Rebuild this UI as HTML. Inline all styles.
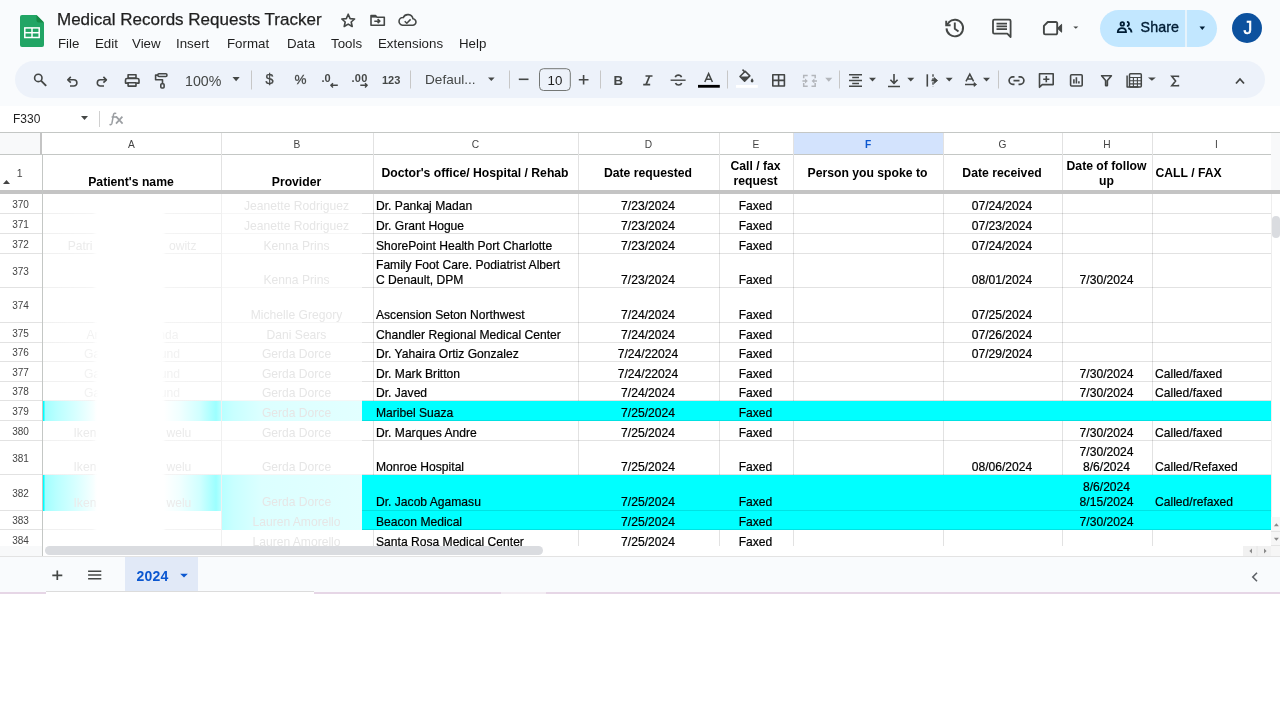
<!DOCTYPE html>
<html><head><meta charset="utf-8">
<style>
*{margin:0;padding:0;box-sizing:border-box}
html{will-change:transform}
html,body{width:1280px;height:720px;overflow:hidden;background:#fff;font-family:"Liberation Sans",sans-serif;position:relative}
.abs{position:absolute}
#top{position:absolute;left:0;top:0;width:1280px;height:106px;background:#f9fbfd}
#title{position:absolute;left:57px;top:9.5px;font-size:17px;color:#1f1f1f;white-space:nowrap;letter-spacing:0px;-webkit-text-stroke:0.25px #1f1f1f}
.menu{position:absolute;top:35.5px;font-size:13.3px;color:#1f1f1f;white-space:nowrap}
#tb{position:absolute;left:15px;top:61px;width:1250px;height:37px;border-radius:19px;background:#edf2fa}
.ic{position:absolute}
.sep{position:absolute;top:69px;width:1px;height:20px;background:#c7c7c7}
.tt{position:absolute;font-size:13px;color:#444746;white-space:nowrap}
#fbar{position:absolute;left:0;top:106px;width:1280px;height:26px;background:#fff}
#namebox{position:absolute;left:13px;top:112px;font-size:12px;color:#1f1f1f}
#gridtop{position:absolute;left:0;top:132px;width:1280px;height:1px;background:#c4c7c5}
/* grid */
#grid{position:absolute;left:0;top:0;width:1280px;height:720px}
.hl{position:absolute;left:0;width:1271px;height:1px;background:rgba(0,0,0,0.115)}
.vl{position:absolute;top:133px;width:1px;height:423px;background:#e2e2e2}
.bg{position:absolute;background:#00ffff}
.rh{position:absolute;left:0;width:41px;text-align:center;font-size:10px;color:#444;padding-top:1px}
.c{position:absolute;font-size:12.1px;color:#000;-webkit-text-stroke:0.2px #000;white-space:nowrap;overflow:hidden;display:flex;align-items:flex-end;line-height:15px;padding-bottom:0px}
.c.left{justify-content:flex-start}
.c span{display:block;width:100%}
.ch{position:absolute;top:133px;height:22px;line-height:24px;text-align:center;font-size:10.2px;color:#444;background:#fff}
.ch.sel{background:#d3e3fd;color:#0b57d0;font-weight:bold}
.rd{font-size:12.1px;white-space:nowrap;overflow:hidden;display:flex;align-items:flex-end;justify-content:center;line-height:15px}
.h1{position:absolute;top:157px;height:34px;font-size:12.2px;font-weight:bold;color:#000;display:flex;line-height:15.5px;white-space:nowrap}
.h1 span{display:block;width:100%}
.h1.bottom{align-items:flex-end;padding-bottom:1px}
.h1.middle{align-items:center}
</style></head>
<body>
<div id="top"></div>
<!-- sheets logo -->
<svg class="abs" style="left:20px;top:15px" width="24" height="32" viewBox="0 0 24 32">
<path d="M2 0h14.5l7.5 7.5v22.5a2 2 0 0 1-2 2H2a2 2 0 0 1-2-2V2a2 2 0 0 1 2-2z" fill="#22a565"/>
<path d="M16.5 0l7.5 7.5h-5.5a2 2 0 0 1-2-2z" fill="#168a47"/>
<rect x="4.8" y="12.9" width="14.4" height="9.6" fill="none" stroke="#fff" stroke-width="1.5"/>
<line x1="12" y1="12.9" x2="12" y2="22.5" stroke="#fff" stroke-width="1.5"/>
<line x1="4.8" y1="17.7" x2="19.2" y2="17.7" stroke="#fff" stroke-width="1.5"/>
</svg>
<div id="title">Medical Records Requests Tracker</div>
<div class="menu" style="left:58px">File</div>
<div class="menu" style="left:95px">Edit</div>
<div class="menu" style="left:132px">View</div>
<div class="menu" style="left:176px">Insert</div>
<div class="menu" style="left:227px">Format</div>
<div class="menu" style="left:287px">Data</div>
<div class="menu" style="left:331px">Tools</div>
<div class="menu" style="left:378px">Extensions</div>
<div class="menu" style="left:459px">Help</div>

<div id="tb"></div>
<svg class="abs" style="left:0;top:60px" width="1280" height="40" viewBox="0 60 1280 40" fill="none" stroke="#444746" stroke-width="1.6" stroke-linecap="butt" stroke-linejoin="round">
<!-- search -->
<circle cx="38.3" cy="77.9" r="3.7"/>
<path d="M41 80.6L46.2 85.8" stroke-width="1.9"/>
<!-- undo -->
<path d="M68.2 79.8H73.8a3.1 3.1 0 0 1 0 6.2H70"/>
<path d="M70.8 76.9L67.8 79.8L70.8 82.7"/>
<!-- redo -->
<path d="M106 79.8H100.4a3.1 3.1 0 0 0 0 6.2H104"/>
<path d="M103.4 76.9L106.4 79.8L103.4 82.7"/>
<!-- print -->
<rect x="128.1" y="74.8" width="7.9" height="3.2"/>
<path d="M128 83.1H125.5V80a1.5 1.5 0 0 1 1.5-1.5H137.5a1.5 1.5 0 0 1 1.5 1.5V83.1H136.3"/>
<rect x="128.1" y="82.8" width="7.9" height="3.3"/>
<!-- roller -->
<rect x="157.9" y="73.7" width="9" height="2.8" rx="1"/>
<path d="M157.9 75.1H155.6V79.7H162.5V83.5"/>
<rect x="160.8" y="83.7" width="3.3" height="4.3" rx="1"/>
<!-- zoom dropdown -->
<path d="M232.5 77h7.2l-3.6 4.2z" fill="#444746" stroke="none"/>
<!-- separators -->
<g stroke="#c7c7c7" stroke-width="1">
<path d="M251.5 70.5V89.5"/><path d="M410.5 70.5V88.5"/><path d="M509.5 70.5V88.5"/><path d="M600.5 70.5V88.5"/><path d="M727.5 70.5V88.5"/><path d="M839.5 70.5V88.5"/><path d="M998.5 70.5V88.5"/>
</g>
<!-- dec arrows -->
<path d="M331 85.3H337.8M333 83.2L330.8 85.3L333 87.4" stroke-width="1.4"/>
<path d="M360.3 85.3H367M365 83.2L367.2 85.3L365 87.4" stroke-width="1.4"/>
<!-- font dropdown -->
<path d="M488 77.5h6.6l-3.3 3.4z" fill="#444746" stroke="none"/>
<!-- minus / plus -->
<path d="M518.8 79.3H528.5"/>
<path d="M578.8 79.8H588.5M583.6 75V84.6"/>
<!-- font size box -->
<rect x="539.5" y="68.7" width="30.8" height="21.8" rx="4" stroke="#747775" stroke-width="1"/>
<!-- strike -->
<path d="M670.6 80.2H685.6" stroke-width="1.4"/>
<path d="M681.5 77.2a3.2 2.7 0 0 0-6.2 0M675.5 83a3.2 2.6 0 0 0 6.2 0" stroke-width="1.6"/>
<!-- text color bar -->
<rect x="698" y="84.9" width="21.8" height="2.8" fill="#000" stroke="none"/>
<path d="M704.8 82L708.6 73.6L712.4 82M706.1 79.2H711.1" stroke-width="1.5" stroke-linejoin="miter"/>
<!-- fill bucket -->
<path d="M740 76.5L745.2 71.3L749.8 75.9L744.6 81.1Z" fill="none"/>
<path d="M740.3 76.5H749.5L744.6 81.1Z" fill="#444746" stroke="none"/>
<path d="M742.5 69.6L745.4 72.5"/>
<path d="M752.1 78.3c.9 1.2 1.4 2 1.4 2.8a1.4 1.4 0 0 1-2.8 0c0-.8.5-1.6 1.4-2.8z" fill="#444746" stroke="none"/>
<rect x="736" y="85" width="21.8" height="2.8" fill="#fff" stroke="none"/>
<!-- borders -->
<rect x="772.8" y="74.8" width="11.6" height="11.2"/>
<path d="M778.6 74.8V86M772.8 80.4H784.4"/>
<!-- merge disabled -->
<g stroke="#b3b6bb" stroke-width="1.5" stroke-linejoin="miter" fill="none">
<path d="M807.7 75.5H803.7V78.2M811.5 75.5H815.2V78.2M803.7 83.1V86.2H807.7M815.2 83.1V86.2H811.5"/>
</g>
<path d="M802.4 80.3H805V78.6L807.8 81L805 83.4V81.7H802.4Z" fill="#b3b6bb" stroke="none"/>
<path d="M817 80.3H814.4V78.6L811.6 81L814.4 83.4V81.7H817Z" fill="#b3b6bb" stroke="none"/>
<path d="M825.2 77.8h7.1l-3.55 3.9z" fill="#b3b6bb" stroke="none"/>
<!-- halign -->
<path d="M849 74.7H862M852.2 77.6H859M849 80.5H862M852.2 83.4H859M849 86.3H862" stroke-width="1.5"/>
<!-- valign -->
<path d="M894 74V83.2M890.4 79.8L894 83.4L897.6 79.8M888 86.5H900" stroke-width="1.6"/>
<!-- wrap -->
<path d="M927.3 74.3V86.6" stroke-width="1.6"/><path d="M933 74.3V86.6" stroke-width="1.4" stroke-dasharray="2.4 1.6"/><path d="M931.5 80.5H936" stroke-width="1.6"/><path d="M934.2 77.6L937.6 80.5L934.2 83.4Z" fill="#444746" stroke-width="0.8"/>
<!-- rotate -->
<path d="M966 81.4L969.8 74.2L973.6 81.4M967.3 79H972.3" stroke-width="1.5" stroke-linejoin="miter"/>
<path d="M965 84.5H974.5" stroke-width="1.5"/><path d="M974 82.6L976.6 84.5L974 86.4Z" fill="#444746" stroke-width="0.8"/>
<!-- dropdowns -->
<g fill="#444746" stroke="none">
<path d="M869 77.8h7l-3.5 3.6z"/><path d="M907.3 77.8h7l-3.5 3.6z"/><path d="M945.7 77.8h7l-3.5 3.6z"/><path d="M983 77.8h7l-3.5 3.6z"/><path d="M1148 77.5h7.8l-3.9 3.2z"/>
</g>
<!-- link -->
<path d="M1014.5 76.9H1012.8a3.7 3.7 0 0 0 0 7.4H1014.5M1018.5 76.9H1020.2a3.7 3.7 0 0 1 0 7.4H1018.5M1013.5 80.6H1019.5" stroke-width="1.7"/>
<!-- comment add -->
<path d="M1039.5 73.8H1053.2V84.6H1042.2L1039.5 87.3Z"/>
<path d="M1046.3 76.1V82.3M1043.2 79.2H1049.4" stroke-width="1.6"/>
<!-- chart -->
<rect x="1070.6" y="74.8" width="11.6" height="11.2" rx="1"/>
<path d="M1073.9 79.3V83.6M1076.4 77.3V83.6M1078.9 81.3V83.6" stroke-width="1.6"/>
<!-- filter -->
<path d="M1101.6 75.7H1111.4L1107.4 80.6V85.6H1105.6V80.6Z" stroke-width="1.6"/>
<!-- functions/table -->
<path d="M1127.1 75.5V87H1138.5" stroke-width="1.5"/>
<rect x="1129.5" y="73.8" width="11.8" height="13.2" rx="1" stroke-width="1.5"/>
<path d="M1129.5 77.5H1141.3M1129.5 80.7H1141.3M1129.5 83.9H1141.3M1133.4 77.5V87M1137.4 77.5V87" stroke-width="1.1"/>
<!-- italic I -->
<path d="M645.5 76H652.5M643.2 84.6H650.2M649.6 76L646 84.6" stroke-width="1.7"/>
<!-- sigma -->
<path d="M1178.4 77.3V76.3H1171.8L1175.6 81.1L1171.8 85.8H1178.4V84.8" stroke-width="1.6" stroke-linejoin="miter"/>
<!-- caret up -->
<path d="M1236 83.5L1240 79L1244 83.5" stroke-width="1.8" stroke-linejoin="miter"/>
</svg>

<div class="tt" style="left:185px;top:72.5px;font-size:14.2px">100%</div>
<div class="tt" style="left:265.5px;top:71px;font-size:14.5px;-webkit-text-stroke:0.3px #444746">$</div>
<div class="tt" style="left:294.5px;top:71.5px;font-size:13.5px;-webkit-text-stroke:0.3px #444746">%</div>
<div class="tt" style="left:321.5px;top:71.5px;font-size:11px;font-weight:bold">.0</div>
<div class="tt" style="left:351.5px;top:71.5px;font-size:11px;font-weight:bold;letter-spacing:0.3px">.00</div>
<div class="tt" style="left:382px;top:73.5px;font-size:11px;font-weight:bold">123</div>
<div class="tt" style="left:425px;top:71.5px;font-size:13.6px">Defaul...</div>
<div class="tt" style="left:547.5px;top:72.5px;font-size:13.3px;color:#1f1f1f">10</div>
<div class="tt" style="left:613.5px;top:73px;font-size:13.3px;font-weight:bold">B</div>




<!-- title icons -->
<svg class="abs" style="left:330px;top:5px" width="100" height="30" viewBox="330 5 100 30" fill="none" stroke="#444746" stroke-width="1.6" stroke-linejoin="round">
<path d="M348.2 14.2L350.1 18.6L354.6 19L351.2 22L352.2 26.5L348.2 24.1L344.2 26.5L345.2 22L341.8 19L346.3 18.6Z"/>
<path d="M371 15.6H375.5L377 17.2H384.3V25.2H371Z"/>
<path d="M371 16.4H376" stroke-width="2.4"/>
<path d="M374.3 21.2H379.5M377.6 19.2L379.8 21.2L377.6 23.2" stroke-width="1.6"/>
<path d="M402.5 25.2H412.5a3.2 3.2 0 0 0 .5-6.4a5.2 5.2 0 0 0-9.8-1.2a3.8 3.8 0 0 0-.7 7.6Z"/>
<path d="M404.7 21.2L406.8 23.2L410.6 19.4" stroke-width="1.5"/>
</svg>
<!-- right header icons -->
<svg class="abs" style="left:930px;top:5px" width="160" height="40" viewBox="930 5 160 40" fill="none" stroke="#444746" stroke-width="1.9" stroke-linejoin="round">
<path d="M946.5 28.4A8.3 8.3 0 1 0 948.9 22.2"/>
<path d="M946.2 20.8V25.3H950.6" stroke-linejoin="miter"/><path d="M946.6 24.9L949.6 21.9"/>
<path d="M954.8 22.6V28.8L958.5 31.5"/>
<path d="M994.3 19.7H1009.3a1.3 1.3 0 0 1 1.3 1.3V37L1007.3 33.6H994.3a1.3 1.3 0 0 1-1.3-1.3V21a1.3 1.3 0 0 1 1.3-1.3Z" stroke-width="1.8"/>
<path d="M996.5 23.6H1007M996.5 26.4H1007M996.5 29.2H1007" stroke-width="1.7"/>
<path d="M1047.8 22H1055.9a1.3 1.3 0 0 1 1.3 1.3V33.1a1.3 1.3 0 0 1-1.3 1.3H1045.2a1.3 1.3 0 0 1-1.3-1.3V25.9Z" stroke-width="1.9"/>
<path d="M1058 27.8L1061.6 24.3V32.2L1058 28.7Z" fill="#444746" stroke-width="1"/>
<path d="M1073.3 26.4h5l-2.5 2.4z" fill="#444746" stroke="none"/>
</svg>
<div class="abs" style="left:1100px;top:9.5px;width:117px;height:37px;border-radius:19px;background:#c2e7ff"></div>
<div class="abs" style="left:1185px;top:9.5px;width:1.5px;height:37px;background:#e6f3fc"></div>
<svg class="abs" style="left:1110px;top:15px" width="30" height="25" viewBox="1110 15 30 25" fill="none" stroke="#001d35" stroke-width="1.8">
<circle cx="1122.3" cy="23.9" r="1.75"/>
<path d="M1117.8 32.1C1117.8 29.6 1119.6 28.2 1121.9 28.2C1124.2 28.2 1126 29.6 1126 32.1Z"/>
<path d="M1126.9 21.9a2.05 2.05 0 0 1 0 4.1"/>
<path d="M1128.2 28.1c1.9 0.6 3.3 2 3.3 4.5"/>
</svg>
<div class="abs" style="left:1140.5px;top:18.5px;font-size:14.3px;font-weight:normal;-webkit-text-stroke:0.35px #001d35;color:#001d35;letter-spacing:0.1px;top:19.3px">Share</div>
<svg class="abs" style="left:1199px;top:26px" width="7" height="5" viewBox="0 0 7 5"><path d="M0.5 0.6h5.6l-2.8 3.4z" fill="#001d35"/></svg>
<div class="abs" style="left:1232px;top:13px;width:30px;height:30px;border-radius:50%;background:#0c519e;color:#fff;font-size:17.5px;font-weight:normal;-webkit-text-stroke:0.5px #fff;text-align:center;line-height:31px;padding-left:1.5px">J</div>
<div id="fbar"></div>
<div id="namebox">F330</div>
<svg class="abs" style="left:81px;top:116px" width="7" height="4" viewBox="0 0 7 4"><path d="M0 0h7L3.5 4z" fill="#444746"/></svg>
<div class="abs" style="left:99px;top:111px;width:1px;height:16px;background:#d0d0d0"></div>
<svg class="abs" style="left:105px;top:108px" width="22" height="20" viewBox="105 108 22 20" fill="none" stroke="#9c9fa3" stroke-width="1.5">
<path d="M116.2 113.6a1.6 1.6 0 0 0-2.6 0.6L111.9 123.4a1.6 1.6 0 0 1-2.4 1"/>
<path d="M111.6 117H117" stroke-width="1.6"/>
<path d="M116.2 116.6L122.6 123.6M122.4 116.6L116 123.6" stroke-width="1.7"/>
</svg>
<div id="gridtop"></div>

<div id="grid">
<!-- corner -->
<div class="abs" style="left:0;top:133px;width:40px;height:22px;background:#f8f9fa"></div>
<div class="abs" style="left:40px;top:133px;width:3px;height:22px;background:#c4c4c4"></div>
<div class="ch" style="left:42px;width:179px">A</div>
<div class="ch" style="left:221px;width:152px">B</div>
<div class="ch" style="left:373px;width:205px">C</div>
<div class="ch" style="left:578px;width:141px">D</div>
<div class="ch" style="left:719px;width:74px">E</div>
<div class="ch sel" style="left:793px;width:150px">F</div>
<div class="ch" style="left:943px;width:119px">G</div>
<div class="ch" style="left:1062px;width:90px">H</div>
<div class="ch" style="left:1152px;width:129px">I</div>
<div class="abs" style="left:0;top:154px;width:1271px;height:1px;background:#c4c7c5"></div>
<!-- row 1 -->
<div class="abs" style="left:0;top:155px;width:40px;height:35px;background:#fff"></div>
<div class="abs" style="left:0;top:167px;width:40px;text-align:right;padding-right:17.5px;font-size:10.5px;color:#444">1</div>
<svg class="abs" style="left:3px;top:180px" width="7" height="4" viewBox="0 0 7 4"><path d="M0 4h7L3.5 0z" fill="#444"/></svg>
<div class="h1 bottom" style="left:44px;width:174px;text-align:center"><span>Patient's name</span></div>
<div class="h1 bottom" style="left:223px;width:147px;text-align:center"><span>Provider</span></div>
<div class="h1 middle" style="left:375px;width:200px;text-align:center"><span>Doctor's office/ Hospital / Rehab</span></div>
<div class="h1 middle" style="left:580px;width:136px;text-align:center"><span>Date requested</span></div>
<div class="h1 middle" style="left:721px;width:69px;text-align:center"><span>Call / fax<br>request</span></div>
<div class="h1 middle" style="left:795px;width:145px;text-align:center"><span>Person you spoke to</span></div>
<div class="h1 middle" style="left:945px;width:114px;text-align:center"><span>Date received</span></div>
<div class="h1 middle" style="left:1064px;width:85px;text-align:center"><span>Date of follow<br>up</span></div>
<div class="h1 middle" style="left:1155.5px;width:114px;text-align:left"><span>CALL / FAX</span></div>
<div class="vl" style="left:221px"></div>
<div class="vl" style="left:373px"></div>
<div class="vl" style="left:578px"></div>
<div class="vl" style="left:719px"></div>
<div class="vl" style="left:793px"></div>
<div class="vl" style="left:943px"></div>
<div class="vl" style="left:1062px"></div>
<div class="vl" style="left:1152px"></div>
<div class="vl" style="left:1271px"></div>
<div class="hl" style="top:213px"></div>
<div class="rh" style="top:194px;height:19px;line-height:19px">370</div>
<div class="c" style="left:376px;width:198px;top:195px;height:19px;text-align:left"><span>Dr. Pankaj Madan</span></div>
<div class="c" style="left:581px;width:134px;top:195px;height:19px;text-align:center"><span>7/23/2024</span></div>
<div class="c" style="left:722px;width:67px;top:195px;height:19px;text-align:center"><span>Faxed</span></div>
<div class="c" style="left:946px;width:112px;top:195px;height:19px;text-align:center"><span>07/24/2024</span></div>
<div class="hl" style="top:233px"></div>
<div class="rh" style="top:214px;height:19px;line-height:19px">371</div>
<div class="c" style="left:376px;width:198px;top:215px;height:19px;text-align:left"><span>Dr. Grant Hogue</span></div>
<div class="c" style="left:581px;width:134px;top:215px;height:19px;text-align:center"><span>7/23/2024</span></div>
<div class="c" style="left:722px;width:67px;top:215px;height:19px;text-align:center"><span>Faxed</span></div>
<div class="c" style="left:946px;width:112px;top:215px;height:19px;text-align:center"><span>07/23/2024</span></div>
<div class="hl" style="top:253px"></div>
<div class="rh" style="top:234px;height:19px;line-height:19px">372</div>
<div class="c" style="left:376px;width:198px;top:235px;height:19px;text-align:left"><span>ShorePoint Health Port Charlotte</span></div>
<div class="c" style="left:581px;width:134px;top:235px;height:19px;text-align:center"><span>7/23/2024</span></div>
<div class="c" style="left:722px;width:67px;top:235px;height:19px;text-align:center"><span>Faxed</span></div>
<div class="c" style="left:946px;width:112px;top:235px;height:19px;text-align:center"><span>07/24/2024</span></div>
<div class="hl" style="top:287px"></div>
<div class="rh" style="top:254px;height:33px;line-height:33px">373</div>
<div class="c" style="left:376px;width:198px;top:255px;height:33px;text-align:left"><span>Family Foot Care. Podiatrist Albert<br>C Denault, DPM</span></div>
<div class="c" style="left:581px;width:134px;top:255px;height:33px;text-align:center"><span>7/23/2024</span></div>
<div class="c" style="left:722px;width:67px;top:255px;height:33px;text-align:center"><span>Faxed</span></div>
<div class="c" style="left:946px;width:112px;top:255px;height:33px;text-align:center"><span>08/01/2024</span></div>
<div class="c" style="left:1065px;width:83px;top:255px;height:33px;text-align:center"><span>7/30/2024</span></div>
<div class="hl" style="top:322px"></div>
<div class="rh" style="top:288px;height:34px;line-height:34px">374</div>
<div class="c" style="left:376px;width:198px;top:289px;height:34px;text-align:left"><span>Ascension Seton Northwest</span></div>
<div class="c" style="left:581px;width:134px;top:289px;height:34px;text-align:center"><span>7/24/2024</span></div>
<div class="c" style="left:722px;width:67px;top:289px;height:34px;text-align:center"><span>Faxed</span></div>
<div class="c" style="left:946px;width:112px;top:289px;height:34px;text-align:center"><span>07/25/2024</span></div>
<div class="hl" style="top:342px"></div>
<div class="rh" style="top:323px;height:19px;line-height:19px">375</div>
<div class="c" style="left:376px;width:198px;top:324px;height:19px;text-align:left"><span>Chandler Regional Medical Center</span></div>
<div class="c" style="left:581px;width:134px;top:324px;height:19px;text-align:center"><span>7/24/2024</span></div>
<div class="c" style="left:722px;width:67px;top:324px;height:19px;text-align:center"><span>Faxed</span></div>
<div class="c" style="left:946px;width:112px;top:324px;height:19px;text-align:center"><span>07/26/2024</span></div>
<div class="hl" style="top:361px"></div>
<div class="rh" style="top:343px;height:18px;line-height:18px">376</div>
<div class="c" style="left:376px;width:198px;top:344px;height:18px;text-align:left"><span>Dr. Yahaira Ortiz Gonzalez</span></div>
<div class="c" style="left:581px;width:134px;top:344px;height:18px;text-align:center"><span>7/24/22024</span></div>
<div class="c" style="left:722px;width:67px;top:344px;height:18px;text-align:center"><span>Faxed</span></div>
<div class="c" style="left:946px;width:112px;top:344px;height:18px;text-align:center"><span>07/29/2024</span></div>
<div class="hl" style="top:381px"></div>
<div class="rh" style="top:362px;height:19px;line-height:19px">377</div>
<div class="c" style="left:376px;width:198px;top:363px;height:19px;text-align:left"><span>Dr. Mark Britton</span></div>
<div class="c" style="left:581px;width:134px;top:363px;height:19px;text-align:center"><span>7/24/22024</span></div>
<div class="c" style="left:722px;width:67px;top:363px;height:19px;text-align:center"><span>Faxed</span></div>
<div class="c" style="left:1065px;width:83px;top:363px;height:19px;text-align:center"><span>7/30/2024</span></div>
<div class="c" style="left:1155px;width:112px;top:363px;height:19px;text-align:left"><span>Called/faxed</span></div>
<div class="hl" style="top:400px"></div>
<div class="rh" style="top:382px;height:18px;line-height:18px">378</div>
<div class="c" style="left:376px;width:198px;top:383px;height:18px;text-align:left"><span>Dr. Javed</span></div>
<div class="c" style="left:581px;width:134px;top:383px;height:18px;text-align:center"><span>7/24/2024</span></div>
<div class="c" style="left:722px;width:67px;top:383px;height:18px;text-align:center"><span>Faxed</span></div>
<div class="c" style="left:1065px;width:83px;top:383px;height:18px;text-align:center"><span>7/30/2024</span></div>
<div class="c" style="left:1155px;width:112px;top:383px;height:18px;text-align:left"><span>Called/faxed</span></div>
<div class="bg" style="left:42px;top:401px;width:1229px;height:20px"></div>
<div class="hl" style="top:420px"></div>
<div class="rh" style="top:401px;height:19px;line-height:19px">379</div>
<div class="c" style="left:376px;width:198px;top:402px;height:19px;text-align:left"><span>Maribel Suaza</span></div>
<div class="c" style="left:581px;width:134px;top:402px;height:19px;text-align:center"><span>7/25/2024</span></div>
<div class="c" style="left:722px;width:67px;top:402px;height:19px;text-align:center"><span>Faxed</span></div>
<div class="hl" style="top:440px"></div>
<div class="rh" style="top:421px;height:19px;line-height:19px">380</div>
<div class="c" style="left:376px;width:198px;top:422px;height:19px;text-align:left"><span>Dr. Marques Andre</span></div>
<div class="c" style="left:581px;width:134px;top:422px;height:19px;text-align:center"><span>7/25/2024</span></div>
<div class="c" style="left:722px;width:67px;top:422px;height:19px;text-align:center"><span>Faxed</span></div>
<div class="c" style="left:1065px;width:83px;top:422px;height:19px;text-align:center"><span>7/30/2024</span></div>
<div class="c" style="left:1155px;width:112px;top:422px;height:19px;text-align:left"><span>Called/faxed</span></div>
<div class="hl" style="top:474px"></div>
<div class="rh" style="top:441px;height:33px;line-height:33px">381</div>
<div class="c" style="left:376px;width:198px;top:442px;height:33px;text-align:left"><span>Monroe Hospital</span></div>
<div class="c" style="left:581px;width:134px;top:442px;height:33px;text-align:center"><span>7/25/2024</span></div>
<div class="c" style="left:722px;width:67px;top:442px;height:33px;text-align:center"><span>Faxed</span></div>
<div class="c" style="left:946px;width:112px;top:442px;height:33px;text-align:center"><span>08/06/2024</span></div>
<div class="c" style="left:1065px;width:83px;top:442px;height:33px;text-align:center"><span>7/30/2024<br>8/6/2024</span></div>
<div class="c" style="left:1155px;width:112px;top:442px;height:33px;text-align:left"><span>Called/Refaxed</span></div>
<div class="bg" style="left:42px;top:475px;width:1229px;height:36px"></div>
<div class="hl" style="top:510px"></div>
<div class="rh" style="top:475px;height:35px;line-height:35px">382</div>
<div class="c" style="left:376px;width:198px;top:475px;height:35px;text-align:left"><span>Dr. Jacob Agamasu</span></div>
<div class="c" style="left:581px;width:134px;top:475px;height:35px;text-align:center"><span>7/25/2024</span></div>
<div class="c" style="left:722px;width:67px;top:475px;height:35px;text-align:center"><span>Faxed</span></div>
<div class="c" style="left:1065px;width:83px;top:475px;height:35px;text-align:center"><span>8/6/2024<br>8/15/2024</span></div>
<div class="c" style="left:1155px;width:112px;top:475px;height:35px;text-align:left"><span>Called/refaxed</span></div>
<div class="bg" style="left:221px;top:511px;width:1050px;height:19px"></div>
<div class="hl" style="top:529px"></div>
<div class="rh" style="top:511px;height:18px;line-height:18px">383</div>
<div class="c" style="left:376px;width:198px;top:512px;height:18px;text-align:left"><span>Beacon Medical</span></div>
<div class="c" style="left:581px;width:134px;top:512px;height:18px;text-align:center"><span>7/25/2024</span></div>
<div class="c" style="left:722px;width:67px;top:512px;height:18px;text-align:center"><span>Faxed</span></div>
<div class="c" style="left:1065px;width:83px;top:512px;height:18px;text-align:center"><span>7/30/2024</span></div>
<div class="hl" style="top:549px"></div>
<div class="rh" style="top:530px;height:19px;line-height:19px">384</div>
<div class="c" style="left:376px;width:198px;top:531px;height:19px;text-align:left"><span>Santa Rosa Medical Center</span></div>
<div class="c" style="left:581px;width:134px;top:531px;height:19px;text-align:center"><span>7/25/2024</span></div>
<div class="c" style="left:722px;width:67px;top:531px;height:19px;text-align:center"><span>Faxed</span></div>
<div class="abs" style="left:43px;top:194px;width:319px;height:362px;background:#fff"></div>
<div class="abs" style="left:42px;top:213px;width:320px;height:1px;background:linear-gradient(to right,#f0f0f0 0,#f4f4f4 50px,#fff 56px,#fff 118px,#f4f4f4 124px,#f0f0f0 179px,#f6f6f6 180px)"></div>
<div class="abs rd" style="left:224px;width:145px;top:195px;height:19px;color:#e6e6e6">Jeanette Rodriguez</div>
<div class="abs" style="left:42px;top:233px;width:320px;height:1px;background:linear-gradient(to right,#f0f0f0 0,#f4f4f4 50px,#fff 56px,#fff 118px,#f4f4f4 124px,#f0f0f0 179px,#f6f6f6 180px)"></div>
<div class="abs rd" style="left:224px;width:145px;top:215px;height:19px;color:#e6e6e6">Jeanette Rodriguez</div>
<div class="abs" style="left:42px;top:253px;width:320px;height:1px;background:linear-gradient(to right,#f0f0f0 0,#f4f4f4 50px,#fff 56px,#fff 118px,#f4f4f4 124px,#f0f0f0 179px,#f6f6f6 180px)"></div>
<div class="abs rd" style="left:67.7px;top:235px;height:19px;color:#ebebeb">Patri</div>
<div class="abs rd" style="left:46.5px;width:150px;justify-content:flex-end;top:235px;height:19px;color:#ebebeb">owitz</div>
<div class="abs rd" style="left:224px;width:145px;top:235px;height:19px;color:#e6e6e6">Kenna Prins</div>
<div class="abs" style="left:42px;top:287px;width:320px;height:1px;background:linear-gradient(to right,#f0f0f0 0,#f4f4f4 50px,#fff 56px,#fff 118px,#f4f4f4 124px,#f0f0f0 179px,#f6f6f6 180px)"></div>
<div class="abs rd" style="left:224px;width:145px;top:255px;height:33px;color:#e6e6e6">Kenna Prins</div>
<div class="abs" style="left:42px;top:322px;width:320px;height:1px;background:linear-gradient(to right,#f0f0f0 0,#f4f4f4 50px,#fff 56px,#fff 118px,#f4f4f4 124px,#f0f0f0 179px,#f6f6f6 180px)"></div>
<div class="abs rd" style="left:224px;width:145px;top:289px;height:34px;color:#e6e6e6">Michelle Gregory</div>
<div class="abs" style="left:42px;top:342px;width:320px;height:1px;background:linear-gradient(to right,#f0f0f0 0,#f4f4f4 50px,#fff 56px,#fff 118px,#f4f4f4 124px,#f0f0f0 179px,#f6f6f6 180px)"></div>
<div class="abs rd" style="left:86.4px;top:324px;height:19px;color:#f2f2f2">Am</div>
<div class="abs rd" style="left:28.400000000000006px;width:150px;justify-content:flex-end;top:324px;height:19px;color:#f2f2f2">nda</div>
<div class="abs rd" style="left:224px;width:145px;top:324px;height:19px;color:#e6e6e6">Dani Sears</div>
<div class="abs" style="left:42px;top:361px;width:320px;height:1px;background:linear-gradient(to right,#f0f0f0 0,#f4f4f4 50px,#fff 56px,#fff 118px,#f4f4f4 124px,#f0f0f0 179px,#f6f6f6 180px)"></div>
<div class="abs rd" style="left:84px;top:344px;height:18px;color:#f2f2f2">Ga</div>
<div class="abs rd" style="left:30px;width:150px;justify-content:flex-end;top:344px;height:18px;color:#f2f2f2">und</div>
<div class="abs rd" style="left:224px;width:145px;top:344px;height:18px;color:#e6e6e6">Gerda Dorce</div>
<div class="abs" style="left:42px;top:381px;width:320px;height:1px;background:linear-gradient(to right,#f0f0f0 0,#f4f4f4 50px,#fff 56px,#fff 118px,#f4f4f4 124px,#f0f0f0 179px,#f6f6f6 180px)"></div>
<div class="abs rd" style="left:84px;top:363px;height:19px;color:#f2f2f2">Ga</div>
<div class="abs rd" style="left:30px;width:150px;justify-content:flex-end;top:363px;height:19px;color:#f2f2f2">und</div>
<div class="abs rd" style="left:224px;width:145px;top:363px;height:19px;color:#e6e6e6">Gerda Dorce</div>
<div class="abs" style="left:42px;top:400px;width:320px;height:1px;background:linear-gradient(to right,#f0f0f0 0,#f4f4f4 50px,#fff 56px,#fff 118px,#f4f4f4 124px,#f0f0f0 179px,#f6f6f6 180px)"></div>
<div class="abs rd" style="left:84px;top:383px;height:18px;color:#f2f2f2">Ga</div>
<div class="abs rd" style="left:30px;width:150px;justify-content:flex-end;top:383px;height:18px;color:#f2f2f2">und</div>
<div class="abs rd" style="left:224px;width:145px;top:383px;height:18px;color:#e6e6e6">Gerda Dorce</div>
<div class="abs" style="left:42px;top:420px;width:320px;height:1px;background:linear-gradient(to right,#f0f0f0 0,#f4f4f4 50px,#fff 56px,#fff 118px,#f4f4f4 124px,#f0f0f0 179px,#f6f6f6 180px)"></div>
<div class="abs" style="left:42px;top:401px;width:179px;height:20px;background:linear-gradient(to right,#00ffff 0,#00ffff 2px,#a0ffff 3px,#b8ffff 14px,#d8ffff 34px,#f4ffff 50px,#fff 56px,#fff 122px,#f0ffff 138px,#d0ffff 158px,#9cffff 174px,#b8ffff 179px)"></div>
<div class="abs" style="left:221px;top:401px;width:141px;height:20px;background:linear-gradient(to right,#b8ffff 0,#c8ffff 12px,#dcffff 40px,#e2ffff 141px)"></div>
<div class="abs rd" style="left:224px;width:145px;top:402px;height:19px;color:#e6e6e6">Gerda Dorce</div>
<div class="abs" style="left:42px;top:440px;width:320px;height:1px;background:linear-gradient(to right,#f0f0f0 0,#f4f4f4 50px,#fff 56px,#fff 118px,#f4f4f4 124px,#f0f0f0 179px,#f6f6f6 180px)"></div>
<div class="abs rd" style="left:73.5px;top:422px;height:19px;color:#ebebeb">Iken</div>
<div class="abs rd" style="left:41.30000000000001px;width:150px;justify-content:flex-end;top:422px;height:19px;color:#ebebeb">welu</div>
<div class="abs rd" style="left:224px;width:145px;top:422px;height:19px;color:#e6e6e6">Gerda Dorce</div>
<div class="abs" style="left:42px;top:474px;width:320px;height:1px;background:linear-gradient(to right,#f0f0f0 0,#f4f4f4 50px,#fff 56px,#fff 118px,#f4f4f4 124px,#f0f0f0 179px,#f6f6f6 180px)"></div>
<div class="abs rd" style="left:73.5px;top:442px;height:33px;color:#ebebeb">Iken</div>
<div class="abs rd" style="left:41.30000000000001px;width:150px;justify-content:flex-end;top:442px;height:33px;color:#ebebeb">welu</div>
<div class="abs rd" style="left:224px;width:145px;top:442px;height:33px;color:#e6e6e6">Gerda Dorce</div>
<div class="abs" style="left:42px;top:510px;width:320px;height:1px;background:linear-gradient(to right,#f0f0f0 0,#f4f4f4 50px,#fff 56px,#fff 118px,#f4f4f4 124px,#f0f0f0 179px,#f6f6f6 180px)"></div>
<div class="abs" style="left:42px;top:475px;width:179px;height:36px;background:linear-gradient(to right,#00ffff 0,#00ffff 2px,#a0ffff 3px,#b8ffff 14px,#d8ffff 34px,#f4ffff 50px,#fff 56px,#fff 122px,#f0ffff 138px,#d0ffff 158px,#9cffff 174px,#b8ffff 179px)"></div>
<div class="abs" style="left:221px;top:475px;width:141px;height:36px;background:linear-gradient(to right,#b8ffff 0,#c8ffff 12px,#dcffff 40px,#e2ffff 141px)"></div>
<div class="abs rd" style="left:73.5px;top:476px;height:35px;color:#ebebeb">Iken</div>
<div class="abs rd" style="left:41.30000000000001px;width:150px;justify-content:flex-end;top:476px;height:35px;color:#ebebeb">welu</div>
<div class="abs rd" style="left:224px;width:145px;top:475px;height:35px;color:#e6e6e6">Gerda Dorce</div>
<div class="abs" style="left:42px;top:529px;width:320px;height:1px;background:linear-gradient(to right,#f0f0f0 0,#f4f4f4 50px,#fff 56px,#fff 118px,#f4f4f4 124px,#f0f0f0 179px,#f6f6f6 180px)"></div>
<div class="abs" style="left:221px;top:511px;width:141px;height:19px;background:linear-gradient(to right,#b8ffff 0,#c8ffff 12px,#dcffff 40px,#e2ffff 141px)"></div>
<div class="abs rd" style="left:224px;width:145px;top:512px;height:18px;color:#e6e6e6">Lauren Amorello</div>
<div class="abs" style="left:42px;top:549px;width:320px;height:1px;background:linear-gradient(to right,#f0f0f0 0,#f4f4f4 50px,#fff 56px,#fff 118px,#f4f4f4 124px,#f0f0f0 179px,#f6f6f6 180px)"></div>
<div class="abs rd" style="left:224px;width:145px;top:531px;height:19px;color:#e6e6e6">Lauren Amorello</div>
<div class="abs" style="left:94px;top:194px;width:72px;height:362px;background:linear-gradient(to right,rgba(255,255,255,0) 0,#fff 4px,#fff 68px,rgba(255,255,255,0) 72px)"></div>
<div class="abs" style="left:221px;top:194px;width:1px;height:362px;background:#f0f0f0"></div>
<!-- freeze bar -->
<div class="abs" style="left:0;top:190px;width:1280px;height:4px;background:#c4c4c4"></div>
<div class="abs" style="left:42px;top:155px;width:1px;height:401px;background:#c4c7c5"></div>
<!-- right scrollbar -->
<div class="abs" style="left:1271px;top:133px;width:9px;height:57px;background:#f8f9fa"></div>
<div class="abs" style="left:1271px;top:194px;width:9px;height:362px;background:#fff;border-left:1px solid #eee"></div>
<div class="abs" style="left:1272px;top:216px;width:8px;height:22px;border-radius:4px;background:#dadce0"></div>
<!-- h scrollbar -->
<div class="abs" style="left:0;top:546px;width:42px;height:10px;background:#f8f9fa"></div><div class="abs" style="left:43px;top:546px;width:1228px;height:10px;background:#fff"></div>
<div class="abs" style="left:45px;top:546px;width:498px;height:9px;border-radius:4.5px;background:#dadce0"></div>
</div>

<!-- bottom bar -->
<div class="abs" style="left:0;top:556px;width:1280px;height:36px;background:#f9fbfd;border-top:1px solid #e3e3e3"></div>
<div class="abs" style="left:125px;top:557px;width:73px;height:34px;background:#e1e9f7"></div>
<div class="abs" style="left:136.5px;top:567.5px;font-size:14px;font-weight:bold;color:#0b57d0;letter-spacing:0.2px">2024</div>
<svg class="abs" style="left:0;top:550px" width="1280" height="45" viewBox="0 550 1280 45" fill="none">
<path d="M52.3 575.3H62.3M57.3 570.6V580" stroke="#444746" stroke-width="1.7"/>
<path d="M88.1 571.3H101.3M88.1 575H101.3M88.1 578.8H101.3" stroke="#444746" stroke-width="1.5"/>
<path d="M180.2 573.8h7.6l-3.8 3.8z" fill="#0b57d0"/>
<path d="M1257 572.8L1252.8 577L1257 581.2" stroke="#5f6368" stroke-width="1.6"/>
</svg>
<svg class="abs" style="left:1240px;top:515px" width="40" height="45" viewBox="1240 515 40 45">
<rect x="1243" y="546" width="28" height="10" fill="#f1f1f1"/>
<path d="M1257 546V556" stroke="#e6e6e6" stroke-width="1"/>
<path d="M1252 548.5v5l-2.6-2.5z" fill="#8a8a8a"/>
<path d="M1264 548.5v5l2.6-2.5z" fill="#8a8a8a"/>
<rect x="1271" y="517" width="9" height="39" fill="#f6f6f6"/>
<path d="M1271 531.5H1280M1271 545.5H1280" stroke="#e4e4e4" stroke-width="1"/>
<path d="M1273.9 526.2h5l-2.5-3z" fill="#8a8a8a"/>
<path d="M1273.9 537.8h5l-2.5 3z" fill="#8a8a8a"/>
</svg>
<div class="abs" style="left:0;top:591.5px;width:1280px;height:2px;background:linear-gradient(to right,#e6d6e6 0,#e6d6e6 46px,transparent 46px,transparent 314px,#e6d6e6 314px,#e6d6e6 501px,#f2ecf2 501px,#f2ecf2 546px,#e6d6e6 546px)"></div>
<div class="abs" style="left:46px;top:591px;width:268px;height:1px;background:#dcdcdc"></div>
</body></html>
